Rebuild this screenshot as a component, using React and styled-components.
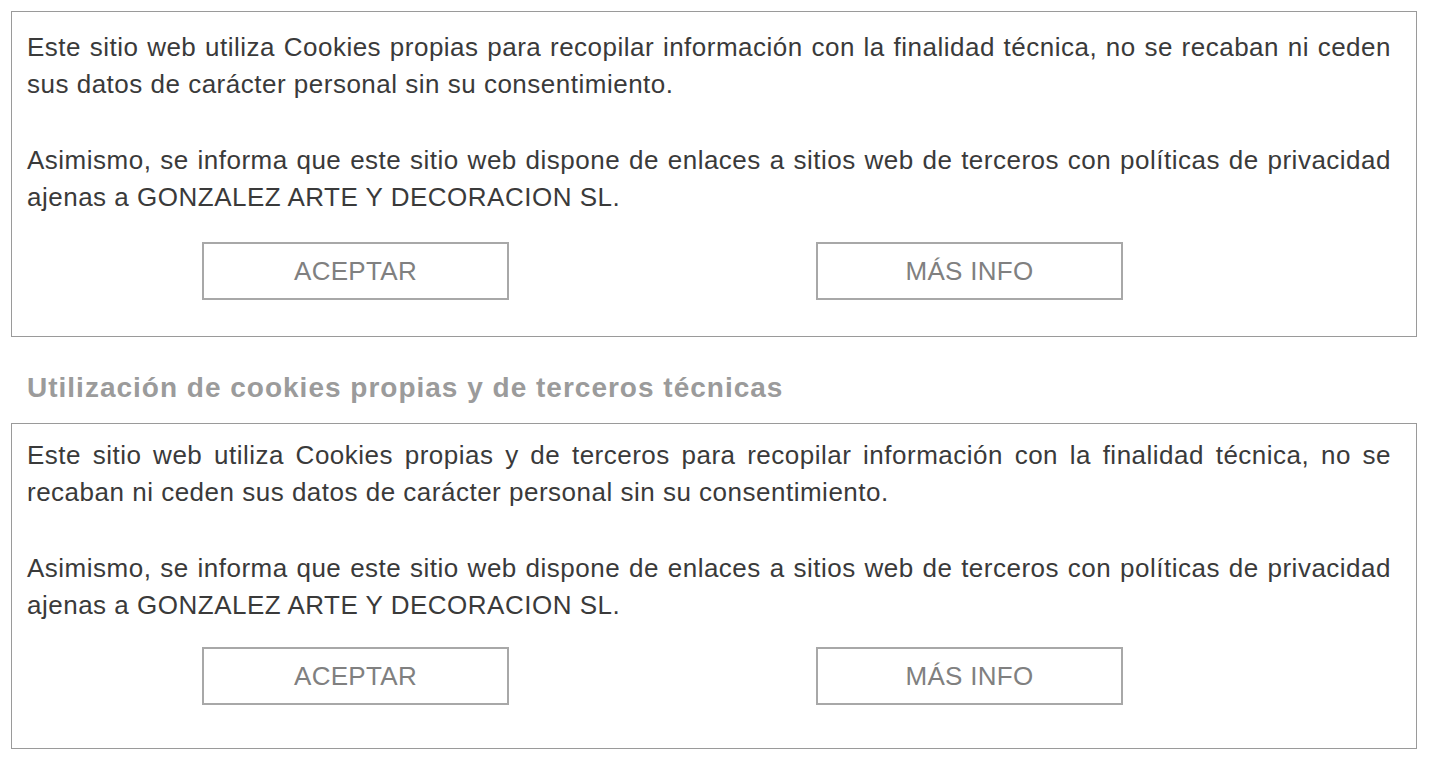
import React from 'react';
import styled, { createGlobalStyle } from 'styled-components';

const GlobalStyle = createGlobalStyle`
  body {
    margin: 0;
    background: #fff;
    font-family: 'Liberation Sans', Arial, Helvetica, sans-serif;
  }
`;

const paragraphs = (thirdParty) => [
  thirdParty
    ? 'Este sitio web utiliza Cookies propias y de terceros para recopilar información con la finalidad técnica, no se recaban ni ceden sus datos de carácter personal sin su consentimiento.'
    : 'Este sitio web utiliza Cookies propias para recopilar información con la finalidad técnica, no se recaban ni ceden sus datos de carácter personal sin su consentimiento.',
  'Asimismo, se informa que este sitio web dispone de enlaces a sitios web de terceros con políticas de privacidad ajenas a GONZALEZ ARTE Y DECORACION SL.',
];

function CookieBox({ thirdParty, $padTop, $padBottom, $btnGap }) {
  return (
    <StyledBox $padTop={$padTop} $padBottom={$padBottom}>
      {paragraphs(thirdParty).map((t) => (
        <Text key={t}>{t}</Text>
      ))}
      <Actions $gap={$btnGap}>
        <Button type="button">ACEPTAR</Button>
        <Button type="button">MÁS INFO</Button>
      </Actions>
    </StyledBox>
  );
}

export default function App() {
  return (
    <Page>
      <GlobalStyle />
      <CookieBox $padTop={17} $padBottom={36} $btnGap={26} />
      <Heading>Utilización de cookies propias y de terceros técnicas</Heading>
      <CookieBox thirdParty $padTop={13} $padBottom={43} $btnGap={23} />
    </Page>
  );
}

const Page = styled.div`
  padding: 11px 17px 0 11px;
`;

const StyledBox = styled.div`
  border: 1px solid #9a9a9a;
  padding: ${(p) => p.$padTop}px 25px ${(p) => p.$padBottom}px 15px;
`;

const Text = styled.p`
  margin: 0;
  font-size: 26px;
  line-height: 37px;
  letter-spacing: 0.5px;
  color: #3a3a3a;
  text-align: justify;
  & + & {
    margin-top: 39px;
  }
`;

const Actions = styled.div`
  display: flex;
  gap: 307px;
  margin-top: ${(p) => p.$gap}px;
  padding-left: 175px;
`;

const Button = styled.button`
  width: 307px;
  height: 58px;
  box-sizing: border-box;
  border: 2px solid #a8a8a8;
  background: #fff;
  color: #808080;
  font-family: 'Liberation Sans', Arial, Helvetica, sans-serif;
  font-size: 26px;
  letter-spacing: 0.3px;
  cursor: pointer;
  padding: 0;
`;

const Heading = styled.h2`
  margin: 32px 0 17px 16px;
  font-size: 28px;
  line-height: 37px;
  font-weight: bold;
  letter-spacing: 1px;
  color: #9b9b9b;
`;
